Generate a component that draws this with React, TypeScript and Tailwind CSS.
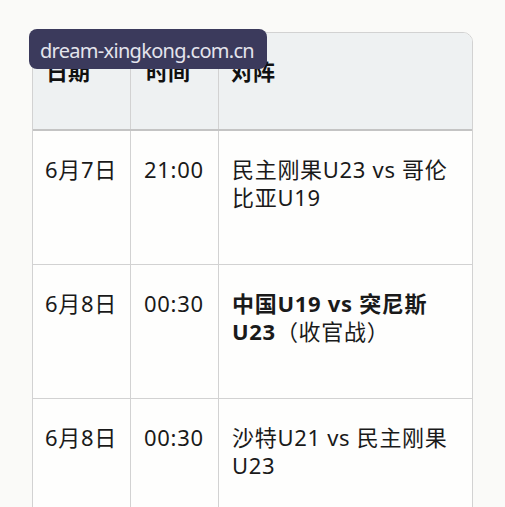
const rows = [
  { date: '6月7日', time: '21:00', match: '民主刚果U23 vs 哥伦比亚U19', bold: false },
  { date: '6月8日', time: '00:30', match: '中国U19 vs 突尼斯U23', extra: '（收官战）', bold: true },
  { date: '6月8日', time: '00:30', match: '沙特U21 vs 民主刚果U23', bold: false },
];

export default function App() {
  return (
    <div
      className="relative w-[505px] h-[507px] overflow-hidden bg-[#fafaf8] pt-[32px] pl-[32px] text-[#1a1a1a]"
      style={{ fontFamily: '"Noto Sans", "Noto Sans CJK SC", sans-serif' }}
    >
      <div className="w-[441px] rounded-t-[10px] border border-[#d2d2d2] overflow-hidden bg-[#fefefd]">
        <div className="grid grid-cols-[98px_88px_253px] h-[98px] bg-[#eef1f2] border-b-2 border-[#c4c4c4] text-[22px] leading-[28px] font-bold text-[#111]">
          <div className="pl-[13px] pt-[24px] border-r border-[#d2d2d2]">日期</div>
          <div className="pl-[15px] pt-[24px] border-r border-[#d2d2d2]">时间</div>
          <div className="pl-[12px] pt-[24px]">对阵</div>
        </div>
        {rows.map((r, i) => (
          <div
            key={i}
            className="grid grid-cols-[98px_88px_253px] h-[134px] border-b border-[#d2d2d2] text-[22px] leading-[28px] tracking-[0.7px]"
          >
            <div className="pl-[12px] pt-[24px] border-r border-[#d2d2d2]">{r.date}</div>
            <div className="pl-[13px] pt-[24px] border-r border-[#d2d2d2]">{r.time}</div>
            <div className="pl-[13px] pr-[14px] pt-[24px]">
              <span className={r.bold ? 'font-bold' : ''}>{r.match}</span>
              {r.extra && <span>{r.extra}</span>}
            </div>
          </div>
        ))}
      </div>

      <div className="absolute left-[29px] top-[29px] w-[238px] h-[40px] rounded-[8px] bg-[#3b3a5c] flex items-center pl-[11px] pt-[3px] whitespace-nowrap text-[20px] leading-none tracking-[-0.7px] text-[#e4e4ec]">
        dream-xingkong.com.cn
      </div>
    </div>
  );
}
